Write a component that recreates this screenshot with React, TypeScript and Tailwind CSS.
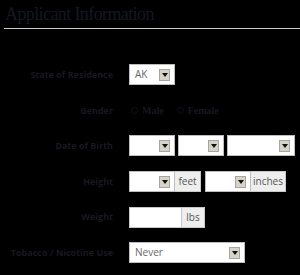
import React from 'react'

function Arrow() {
  return (
    <span className="flex h-[12px] w-[11px] items-center justify-center border border-[#a8a59c] bg-[#d6d3cb]">
      <svg width="6" height="4" viewBox="0 0 6 4">
        <path d="M0 0h6L3 4z" fill="#111" />
      </svg>
    </span>
  )
}

function Select({ value = '', w }: { value?: string; w: string }) {
  return (
    <div className={`flex h-[21px] ${w} items-center justify-between border border-[#bdbdbd] bg-white pl-[5px] pr-[4px] text-[10px] text-[#666]`}>
      <span>{value}</span>
      <Arrow />
    </div>
  )
}

function Addon({ children, w }: { children: React.ReactNode; w: string }) {
  return (
    <span className={`flex h-[21px] ${w} items-center justify-center border border-l-0 border-[#c8c8c8] bg-[#eeeeee] text-[10px] text-[#555]`}>
      {children}
    </span>
  )
}

function Row({ label, children }: { label: string; children: React.ReactNode }) {
  return (
    <div className="flex h-[35.6px] items-center">
      <div className="w-[113px] text-right text-[9px] font-bold text-[#181822]">{label}</div>
      <div className="ml-[16px] flex items-center">{children}</div>
    </div>
  )
}

export default function App() {
  return (
    <div className="h-[275px] w-[300px] overflow-hidden bg-black" style={{ fontFamily: '"Open Sans", "DejaVu Sans", sans-serif' }}>
      <h2
        className="pl-[5px] pt-[4px] text-[18px] leading-[21px] tracking-[-0.6px] text-[#141824]"
        style={{ fontFamily: '"Liberation Serif", serif' }}
      >
        Applicant Information
      </h2>
      <div className="ml-[4px] mt-[3px] h-px bg-[#c9c9c9]" />

      <div className="mt-[28px] flex flex-col">
        <Row label="State of Residence">
          <Select value="AK" w="w-[46px]" />
        </Row>
        <Row label="Gender">
          <div className="flex items-center gap-[4px] text-[10px] font-bold text-[#181822]" style={{ fontFamily: '"Liberation Serif", serif' }}>
            <span className="ml-[2px] h-[7px] w-[7px] rounded-full border border-[#121218]" />
            <span>Male</span>
            <span className="ml-[9px] h-[7px] w-[7px] rounded-full border border-[#121218]" />
            <span>Female</span>
          </div>
        </Row>
        <Row label="Date of Birth">
          <div className="flex gap-[3px]">
            <Select w="w-[46px]" />
            <Select w="w-[46px]" />
            <Select w="w-[68px]" />
          </div>
        </Row>
        <Row label="Height">
          <Select w="w-[46px]" />
          <Addon w="w-[26px]">feet</Addon>
          <div className="ml-[4px]" />
          <Select w="w-[46px]" />
          <Addon w="w-[35px]">inches</Addon>
        </Row>
        <Row label="Weight">
          <span className="h-[21px] w-[53px] border border-[#c8c8c8] bg-white" />
          <Addon w="w-[23px]">lbs</Addon>
        </Row>
        <Row label="Tobacco / Nicotine Use">
          <Select value="Never" w="w-[116px]" />
        </Row>
      </div>
    </div>
  )
}
